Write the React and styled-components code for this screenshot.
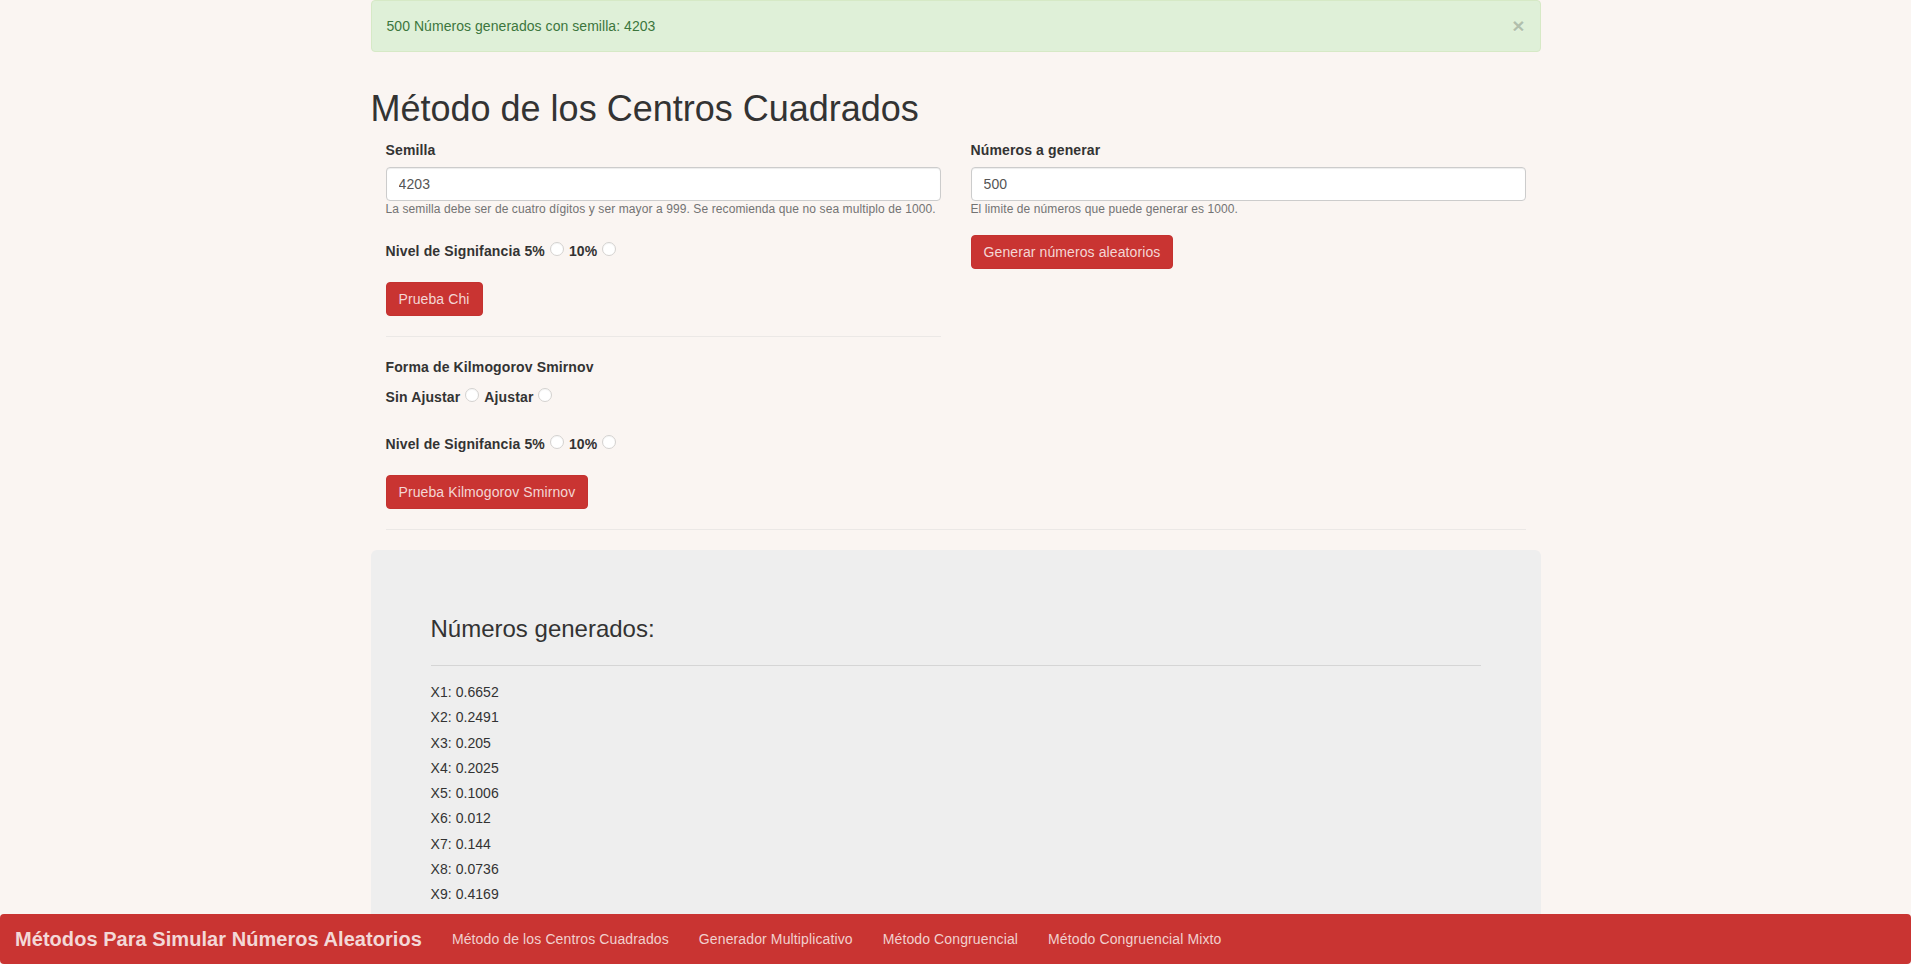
import React from "react";
import styled, { createGlobalStyle } from "styled-components";

const GlobalStyle = createGlobalStyle`
  html, body { margin: 0; padding: 0; }
  body {
    background: #faf5f2;
    font-family: "Liberation Sans", Arial, Helvetica, sans-serif;
    font-size: 14px;
    line-height: 1.42857;
    letter-spacing: 0.13px;
    color: #333;
  }
  *, *::before, *::after { box-sizing: border-box; }
`;

const Container = styled.div`
  width: 1170px;
  margin: 0 auto;
  padding-bottom: 70px;
`;

const Alert = styled.div`
  display: flex;
  align-items: center;
  justify-content: space-between;
  padding: 15px;
  background: #dff0d8;
  border: 1px solid #d6e9c6;
  border-radius: 4px;
  color: #3c763d;
  line-height: 20px;
  letter-spacing: 0.05px;
`;

const CloseButton = styled.button`
  padding: 0;
  margin: 0;
  border: 0;
  background: none;
  font-family: inherit;
  font-size: 21px;
  font-weight: bold;
  line-height: 20px;
  height: 20px;
  color: #000;
  opacity: 0.2;
  text-shadow: 0 1px 0 #fff;
  cursor: pointer;
`;

const Title = styled.h1`
  margin: 37px 0 11px;
  font-size: 36px;
  font-weight: 500;
  line-height: 1.1;
  letter-spacing: 0;
  color: #333;
`;

const Row = styled.div`
  display: grid;
  grid-template-columns: 1fr 1fr;
`;

const Column = styled.div`
  padding: 0 15px;
`;

const FieldLabel = styled.label`
  display: block;
  margin-bottom: 7px;
  font-weight: bold;
  line-height: 20px;
`;

const SectionLabel = styled.div`
  font-weight: bold;
  line-height: 20px;
`;

const TextInput = styled.input`
  display: block;
  width: 100%;
  height: 34px;
  padding: 6px 12px;
  font-family: inherit;
  font-size: 14px;
  line-height: 20px;
  letter-spacing: 0.13px;
  color: #555;
  background: #fff;
  border: 1px solid #ccc;
  border-radius: 4px;
  box-shadow: inset 0 1px 1px rgba(0, 0, 0, 0.075);
  outline: none;
`;

const Help = styled.div`
  margin: 0;
  font-size: 12px;
  line-height: 17px;
  letter-spacing: 0.1px;
  color: #737373;
`;

const RadioLine = styled.div`
  margin-top: ${(p) => p.$mt || 0}px;
  line-height: 20px;
  font-weight: bold;
  white-space: nowrap;
`;

const RadioLabel = styled.label`
  font-weight: bold;
`;

const Radio = styled.input.attrs({ type: "radio" })`
  appearance: none;
  -webkit-appearance: none;
  display: inline-block;
  width: 14px;
  height: 14px;
  margin: 0 5px 0 5px;
  padding: 0;
  border: 1px solid #d4d2d0;
  border-radius: 50%;
  background: #fff;
  box-shadow: inset 0 1px 1px rgba(0, 0, 0, 0.04);
  vertical-align: baseline;
`;

const Button = styled.button`
  display: inline-block;
  padding: 6px 12px;
  font-family: inherit;
  font-size: 14px;
  line-height: 20px;
  letter-spacing: 0.1px;
  color: #f4d6d5;
  background: #c93432;
  border: 1px solid #c43230;
  border-radius: 4px;
  cursor: pointer;
`;

const ButtonBlock = styled.div`
  margin-top: ${(p) => p.$mt || 0}px;
  line-height: 0;
`;

const Divider = styled.hr`
  margin: 20px ${(p) => p.$inset || 0}px;
  border: 0;
  border-top: 1px solid #ebe8e6;
  height: 0;
`;

const Jumbotron = styled.div`
  margin-top: 20px;
  padding: 48px 60px;
  background: #eee;
  border-radius: 6px;
`;

const JumboTitle = styled.h3`
  margin: 18px 0 0;
  font-size: 24px;
  font-weight: 500;
  line-height: 1.1;
  letter-spacing: 0;
  color: #333;
`;

const JumboDivider = styled.hr`
  margin: 23px 0 14px;
  border: 0;
  border-top: 1px solid #d5d5d5;
  height: 0;
`;

const NumberLine = styled.div`
  font-size: 14px;
  line-height: 25.3px;
  letter-spacing: 0.05px;
  color: #333;
`;

const Navbar = styled.nav`
  position: fixed;
  left: 0;
  right: 0;
  bottom: 0;
  height: 50px;
  display: flex;
  align-items: center;
  background: #c93432;
  border-radius: 4px;
`;

const Brand = styled.a`
  padding: 15px;
  font-size: 20px;
  font-weight: bold;
  line-height: 20px;
  letter-spacing: 0.05px;
  color: #f3d8d7;
  text-decoration: none;
`;

const NavList = styled.ul`
  display: flex;
  margin: 0;
  padding: 0;
  list-style: none;
`;

const NavLink = styled.a`
  display: block;
  padding: 15px;
  font-size: 14px;
  line-height: 20px;
  letter-spacing: 0.12px;
  color: #f1d0ce;
  text-decoration: none;
`;

function middleSquare(seed, n) {
  const out = [];
  let x = seed;
  for (let i = 0; i < n; i++) {
    let s = String(x * x);
    if (s.length % 2) s = "0" + s;
    while (s.length < 4) s = "0" + s;
    const start = (s.length - 4) / 2;
    x = parseInt(s.substr(start, 4), 10);
    out.push(String(x / 10000));
  }
  return out;
}

const numbers = middleSquare(4203, 500);

export default function App() {
  return (
    <>
      <GlobalStyle />
      <Container>
        <Alert>
          <span>500 Números generados con semilla: 4203</span>
          <CloseButton aria-label="Cerrar">×</CloseButton>
        </Alert>

        <Title>Método de los Centros Cuadrados</Title>

        <Row>
          <Column>
            <FieldLabel>Semilla</FieldLabel>
            <TextInput defaultValue="4203" />
            <Help>
              La semilla debe ser de cuatro dígitos y ser mayor a 999. Se
              recomienda que no sea multiplo de 1000.
            </Help>
            <RadioLine $mt={23}>
              <RadioLabel>Nivel de Signifancia 5%</RadioLabel>
              <Radio name="chi" />
              <RadioLabel>10%</RadioLabel>
              <Radio name="chi" />
            </RadioLine>
            <ButtonBlock $mt={21}>
              <Button>Prueba Chi</Button>
            </ButtonBlock>
            <Divider />
            <SectionLabel>Forma de Kilmogorov Smirnov</SectionLabel>
            <RadioLine $mt={10}>
              <RadioLabel>Sin Ajustar</RadioLabel>
              <Radio name="forma" />
              <RadioLabel>Ajustar</RadioLabel>
              <Radio name="forma" />
            </RadioLine>
            <RadioLine $mt={27}>
              <RadioLabel>Nivel de Signifancia 5%</RadioLabel>
              <Radio name="ks" />
              <RadioLabel>10%</RadioLabel>
              <Radio name="ks" />
            </RadioLine>
            <ButtonBlock $mt={21}>
              <Button>Prueba Kilmogorov Smirnov</Button>
            </ButtonBlock>
          </Column>
          <Column>
            <FieldLabel>Números a generar</FieldLabel>
            <TextInput defaultValue="500" />
            <Help>El limite de números que puede generar es 1000.</Help>
            <ButtonBlock $mt={17}>
              <Button>Generar números aleatorios</Button>
            </ButtonBlock>
          </Column>
        </Row>

        <Divider $inset={15} />

        <Jumbotron>
          <JumboTitle>Números generados:</JumboTitle>
          <JumboDivider />
          {numbers.map((v, i) => (
            <NumberLine key={i}>
              X{i + 1}: {v}
            </NumberLine>
          ))}
        </Jumbotron>
      </Container>

      <Navbar>
        <Brand href="#">Métodos Para Simular Números Aleatorios</Brand>
        <NavList>
          <li>
            <NavLink href="#">Me&#769;todo de los Centros Cuadrados</NavLink>
          </li>
          <li>
            <NavLink href="#">Generador Multiplicativo</NavLink>
          </li>
          <li>
            <NavLink href="#">Me&#769;todo Congruencial</NavLink>
          </li>
          <li>
            <NavLink href="#">Me&#769;todo Congruencial Mixto</NavLink>
          </li>
        </NavList>
      </Navbar>
    </>
  );
}
